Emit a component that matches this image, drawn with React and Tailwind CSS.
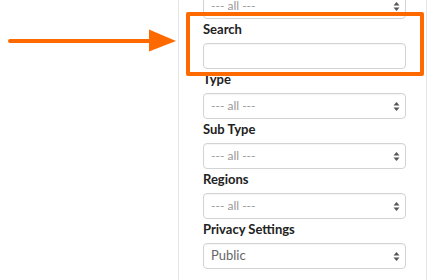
import React from 'react';

const ORANGE = '#ff6a00';

function Arrows() {
  return (
    <svg width="7" height="11" viewBox="0 0 7 11" className="shrink-0">
      <path d="M3.5 1 L6.5 4.5 L0.5 4.5 Z" fill="#555" />
      <path d="M3.5 10 L6.5 6.5 L0.5 6.5 Z" fill="#555" />
    </svg>
  );
}

function SelectBox({ value, muted = true }) {
  return (
    <div className="h-[26px] flex items-center justify-between rounded border border-[#d3d3d3] bg-white pl-[7px] pr-[5px] shadow-[inset_0_1px_1px_rgba(0,0,0,0.04)]">
      <span className={muted ? 'text-[12px] text-[#9a9a9a]' : 'text-[13px] text-[#666]'}>
        {value}
      </span>
      <Arrows />
    </div>
  );
}

function Field({ label, children }) {
  return (
    <div>
      <div className="h-5 mb-1 leading-5 text-[13px] font-bold text-[#222]">{label}</div>
      {children}
    </div>
  );
}

export default function App() {
  return (
    <div className="relative w-[438px] h-[280px] overflow-hidden bg-white font-['Lato','Liberation_Sans',sans-serif]">
      <div className="flex h-full">
        {/* left gutter with the pointer arrow */}
        <div className="w-[178px] shrink-0 relative">
          <svg width="178" height="60" viewBox="0 0 178 60" className="absolute left-0 top-[11px]">
            <line x1="10" y1="30" x2="152" y2="30" stroke={ORANGE} strokeWidth="4" strokeLinecap="round" />
            <path d="M149 18.5 L176 30 L149 40.5 Z" fill={ORANGE} />
          </svg>
        </div>

        {/* filter panel */}
        <div className="w-[249px] shrink-0 border-x border-[#e6e6e6] pl-6 pr-5">
          <div className="-mt-[7px] flex flex-col">
            <SelectBox value="--- all ---" />
            <Field label="Search">
              <div className="h-[26px] rounded border border-[#d3d3d3] bg-white shadow-[inset_0_1px_1px_rgba(0,0,0,0.04)]" />
            </Field>
            <Field label="Type">
              <SelectBox value="--- all ---" />
            </Field>
            <Field label="Sub Type">
              <SelectBox value="--- all ---" />
            </Field>
            <Field label="Regions">
              <SelectBox value="--- all ---" />
            </Field>
            <Field label="Privacy Settings">
              <SelectBox value="Public" muted={false} />
            </Field>
          </div>
        </div>
      </div>

      {/* highlight frame around the Search field */}
      <div className="absolute left-[186px] top-[12px] w-[238px] h-[64px] border-4 border-[#ff6a00] rounded-[2px] pointer-events-none" />
    </div>
  );
}
